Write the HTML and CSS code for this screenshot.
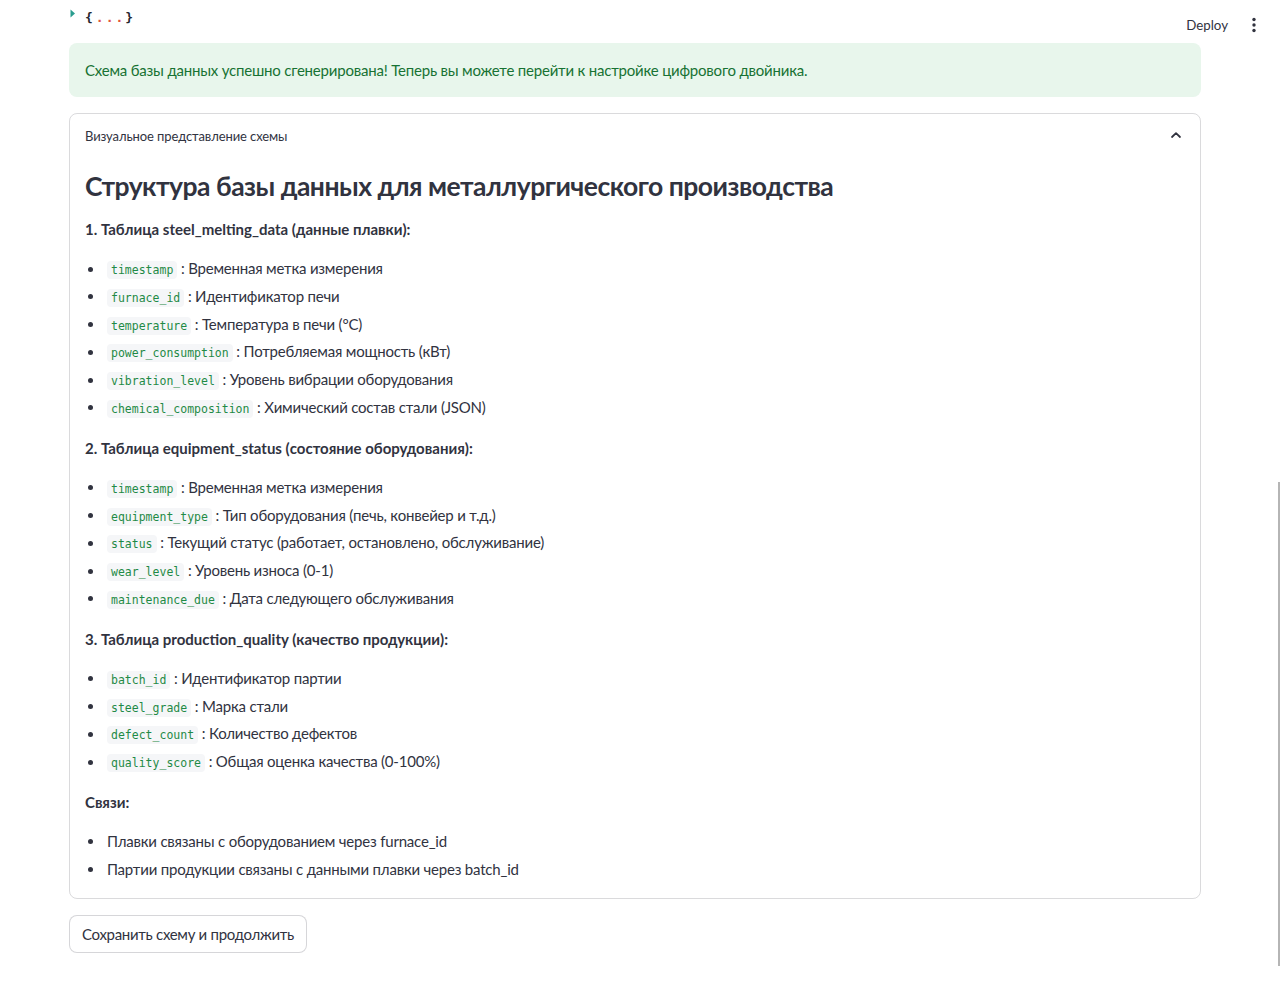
FILE: index.html
```html
<!DOCTYPE html>
<html lang="ru">
<head>
<meta charset="utf-8">
<title>Схема базы данных</title>
<link rel="stylesheet" href="styles.css">
</head>
<body>
<header class="toolbar">
  <span class="deploy">Deploy</span>
  <span class="kebab"><svg width="4" height="16" viewBox="0 0 4 16"><circle cx="2" cy="2.5" r="1.7" fill="#31333f"/><circle cx="2" cy="8" r="1.7" fill="#31333f"/><circle cx="2" cy="13.5" r="1.7" fill="#31333f"/></svg></span>
</header>
<main class="main">
  <div class="json-row">
    <svg class="caret" width="6" height="10" viewBox="0 0 6 10"><path d="M0.5 0.5 L5 4.5 L0.5 8.5 Z" fill="#2a9d8f"/></svg>
    <span class="brace">{</span><span class="dots">...</span><span class="brace">}</span>
  </div>
  <div class="alert">Схема базы данных успешно сгенерирована! Теперь вы можете перейти к настройке цифрового двойника.</div>
  <section class="expander">
    <div class="exp-header">
      <span>Визуальное представление схемы</span>
      <svg class="chev" width="12" height="8" viewBox="0 0 12 8"><path d="M2 6 L6 2.2 L10 6" fill="none" stroke="#31333f" stroke-width="1.8" stroke-linecap="round" stroke-linejoin="round"/></svg>
    </div>
    <div class="exp-body">
      <h3 class="title">Структура базы данных для металлургического производства</h3>
      <p class="sect">1. Таблица steel_melting_data (данные плавки):</p>
      <ul class="list">
        <li><code>timestamp</code> : Временная метка измерения</li>
        <li><code>furnace_id</code> : Идентификатор печи</li>
        <li><code>temperature</code> : Температура в печи (°C)</li>
        <li><code>power_consumption</code> : Потребляемая мощность (кВт)</li>
        <li><code>vibration_level</code> : Уровень вибрации оборудования</li>
        <li><code>chemical_composition</code> : Химический состав стали (JSON)</li>
      </ul>
      <p class="sect">2. Таблица equipment_status (состояние оборудования):</p>
      <ul class="list">
        <li><code>timestamp</code> : Временная метка измерения</li>
        <li><code>equipment_type</code> : Тип оборудования (печь, конвейер и т.д.)</li>
        <li><code>status</code> : Текущий статус (работает, остановлено, обслуживание)</li>
        <li><code>wear_level</code> : Уровень износа (0-1)</li>
        <li><code>maintenance_due</code> : Дата следующего обслуживания</li>
      </ul>
      <p class="sect">3. Таблица production_quality (качество продукции):</p>
      <ul class="list">
        <li><code>batch_id</code> : Идентификатор партии</li>
        <li><code>steel_grade</code> : Марка стали</li>
        <li><code>defect_count</code> : Количество дефектов</li>
        <li><code>quality_score</code> : Общая оценка качества (0-100%)</li>
      </ul>
      <p class="sect">Связи:</p>
      <ul class="list">
        <li>Плавки связаны с оборудованием через furnace_id</li>
        <li>Партии продукции связаны с данными плавки через batch_id</li>
      </ul>
    </div>
  </section>
  <button class="btn">Сохранить схему и продолжить</button>
</main>
<div class="scrollbar"></div>
</body>
</html>
```
FILE: styles.css
```css
html, body {
  margin: 0;
  padding: 0;
  background: #ffffff;
}
body {
  font-family: Lato, Roboto, sans-serif;
  color: #31333f;
  font-size: 15px;
  width: 1280px;
  height: 994px;
  overflow: hidden;
  position: relative;
}
.toolbar {
  position: absolute;
  top: 0;
  right: 0;
  height: 50px;
  display: flex;
  align-items: center;
  padding-right: 24px;
}
.deploy {
  font-size: 13.3px;
  color: #31333f;
  margin-right: 24px;
  line-height: 20px;
}
.kebab {
  display: flex;
  align-items: center;
}
.main {
  margin-left: 69px;
  width: 1132px;
  padding-top: 5px;
}
.json-row {
  height: 24px;
  display: flex;
  align-items: center;
  font-family: "DejaVu Sans Mono", monospace;
  font-size: 13px;
  font-weight: bold;
  margin-bottom: 14px;
}
.caret {
  align-self: flex-start;
  margin: 4px 9px 0 1px;
}
.brace { color: #262730; }
.dots { color: #e0553d; letter-spacing: 2px; margin-left: 3px; }
.alert {
  background: #e8f6ec;
  color: #177233;
  border-radius: 8px;
  padding: 16px;
  line-height: 22px;
  margin-bottom: 16px;
  letter-spacing: -0.2px;
}
.expander {
  border: 1px solid rgba(49, 51, 63, 0.18);
  border-radius: 8px;
}
.exp-header {
  height: 44px;
  display: flex;
  align-items: center;
  justify-content: space-between;
  padding: 0 18px 0 15px;
  font-size: 13px;
  letter-spacing: -0.1px;
}
.chev { margin-top: -2px; }
.exp-body {
  padding: 10px 15px 14px;
}
.title {
  margin: 0 0 11px;
  font-size: 26.5px;
  line-height: 36px;
  font-weight: 700;
  letter-spacing: -0.5px;
}
.sect {
  margin: 0;
  font-weight: 700;
  font-size: 15px;
  line-height: 28px;
}
.list {
  margin: 12px 0 12px;
  padding-left: 22px;
  list-style: none;
}
.list:last-child { margin-bottom: 0; }
.list li {
  position: relative;
  line-height: 27.8px;
  height: 27.8px;
  font-size: 15px;
  letter-spacing: -0.2px;
}
.list li::before {
  content: "";
  position: absolute;
  left: -19px;
  top: 11.5px;
  width: 5px;
  height: 5px;
  border-radius: 50%;
  background: #31333f;
}
code {
  font-family: "DejaVu Sans Mono", monospace;
  font-size: 11.5px;
  line-height: 1;
  letter-spacing: 0;
  color: #1f8a46;
  background: #f5f6f8;
  padding: 2px 4px;
  border-radius: 4px;
}
.btn {
  margin-top: 16px;
  height: 38px;
  padding: 0 12px;
  border: 1px solid rgba(49, 51, 63, 0.2);
  border-radius: 8px;
  background: #fff;
  font-family: inherit;
  font-size: 15px;
  letter-spacing: -0.3px;
  color: #31333f;
}
.scrollbar {
  position: absolute;
  left: 1278px;
  top: 482px;
  width: 2px;
  height: 484px;
  background: #b5b5b5;
}
```
